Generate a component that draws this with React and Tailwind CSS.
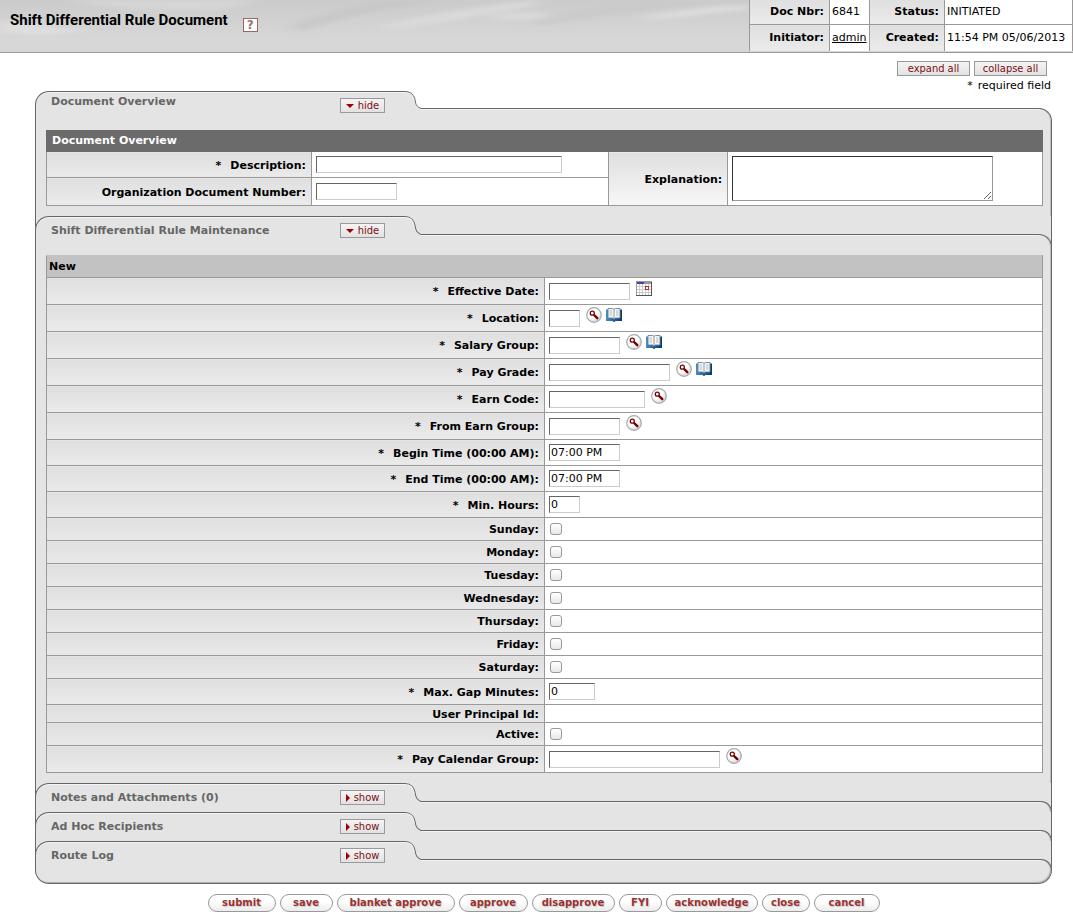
import React from "react";

const LABEL =
  "bg-[linear-gradient(#dfdfdf,#f7f7f7_53px)] border border-[#999] pr-[5px] text-right font-bold";
const FORM_LABEL = LABEL + " pt-[2px]";
const CELL = "border border-[#999] bg-white px-1 text-left";
const FIELD =
  "block h-[17px] rounded-none border border-t-[#666] border-l-[#666] border-r-[#ccc] border-b-[#ccc] bg-white px-px text-[11px] leading-[15px] outline-none";
const SMALL_BUTTON =
  "flex h-[15px] shrink-0 items-center justify-center border border-[#999] bg-[linear-gradient(#f4f4f4,#e2e2e2)] font-['DejaVu_Sans_Condensed','DejaVu_Sans',sans-serif] text-[11px] leading-[13px] text-[#7a1010]";

function LookupIcon() {
  return (
    <svg width="16" height="16" viewBox="0 0 16 16" aria-hidden="true">
      <defs>
        <radialGradient id="lookup-face" cx="0.4" cy="0.35" r="0.7">
          <stop offset="0.5" stopColor="#ffffff" />
          <stop offset="1" stopColor="#cccccc" />
        </radialGradient>
      </defs>
      <circle cx="8" cy="8" r="7.3" fill="url(#lookup-face)" stroke="#a4abaf" strokeWidth="1.2" />
      <circle cx="6.3" cy="6.2" r="2" fill="#fff" stroke="#700" strokeWidth="1.3" />
      <path d="M7.700 7.600L8.600 8.500" stroke="#700" strokeWidth="1.3" />
      <path d="M8.700 8.600L11.300 11.200" stroke="#700" strokeWidth="2.4" strokeLinecap="round" />
    </svg>
  );
}

function BookIcon() {
  return (
    <svg width="16" height="16" viewBox="0 0 16 16" aria-hidden="true">
      <defs>
        <linearGradient id="book-cover" x1="0" y1="0" x2="1" y2="0">
          <stop offset="0" stopColor="#4a8fc2" />
          <stop offset="0.4" stopColor="#2c699f" />
          <stop offset="1" stopColor="#0e3765" />
        </linearGradient>
      </defs>
      <path d="M0 2.500h16v11.500H9.500L8.500 15h-1L6.500 14H0z" fill="url(#book-cover)" />
      <path d="M2 1.500h4.500L8 2.300l1.500-.8H14V11H9.500L8 12l-1.500-1H2z" fill="#f6f6f4" stroke="#5f87a8" strokeWidth=".9" />
      <path d="M8 2.500v9" stroke="#999" strokeWidth="1" />
      <path d="M3.500 4h2.500M3.500 6h2.500M3.500 8h2.500M10 4h2.500M10 6h2.500M10 8h2.500" stroke="#b5b5b5" strokeWidth=".9" />
    </svg>
  );
}

function CalendarIcon() {
  return (
    <svg width="16" height="16" viewBox="0 -1 16 16" shapeRendering="crispEdges" aria-hidden="true">
      <path d="M0 0h16v15H0z" fill="#fff" />
      <path d="M0 0h16v3H0z" fill="#999" />
      <path d="M1 1h7v2H1z" fill="#4444aa" />
      <path d="M3.500 3v11M6.500 3v11M9.500 3v11M12.500 3v11M1 5.500h14M1 8.500h14M1 11.500h14" stroke="#ccc" />
      <path d="M.5 0v15" stroke="#999" />
      <path d="M15.500 1v14M0 14.500h16" stroke="#555" />
      <path d="M9.500 5.500h3v3h-3z" fill="#fff" stroke="#a33" />
    </svg>
  );
}

function HeaderTexture() {
  return (
    <svg className="absolute inset-0 h-full w-full" viewBox="0 0 1073 52" preserveAspectRatio="none" aria-hidden="true">
      <defs>
        <linearGradient id="hd" x1="0" y1="0" x2="0" y2="1">
          <stop offset="0" stopColor="#cbcbcb" />
          <stop offset="0.5" stopColor="#d3d3d3" />
          <stop offset="0.8" stopColor="#d7d7d7" />
        </linearGradient>
        <filter id="soft" x="-20%" y="-50%" width="140%" height="200%">
          <feGaussianBlur stdDeviation="8 2" />
        </filter>
      </defs>
      <rect width="1073" height="52" fill="url(#hd)" />
      <g filter="url(#soft)">
        <path d="M0 20 Q40 26 90 30 L40 36 L0 32z" fill="#dedede" />
        <path d="M60 0 Q170 16 230 8 L260 0z" fill="#d6d6d6" />
        <path d="M300 32 Q350 12 450 0 L380 0 Q320 14 290 26z" fill="#c8c8c8" />
        <path d="M380 26 Q440 12 520 2 L545 0 L530 6 Q470 18 390 30z" fill="#dadada" />
        <path d="M490 16 Q540 8 560 18 L500 20z" fill="#dadada" />
        <path d="M540 26 Q620 10 750 2 L750 0 L640 0 Q570 10 530 22z" fill="#cacaca" />
        <path d="M640 18 Q690 7 750 5 L750 9 Q700 14 650 20z" fill="#dedede" />
      </g>
    </svg>
  );
}

function TabCurve({ first }) {
  return (
    <svg
      className={first ? "block h-[18px] w-4" : "block h-[19px] w-4"}
      viewBox="0 0 16 18"
      preserveAspectRatio="none"
      aria-hidden="true"
    >
      <path d="M0 .5C6 .5 9.500 4.500 10.200 9.500C10.700 14 12 15.500 16 17.500V18H0z" fill="#e4e4e4" />
      <path d="M0 1.500C5.500 1.500 8.500 5 9.200 10" fill="none" stroke="#f8f8f8" />
      <path d="M0 .5C6 .5 9.500 4.500 10.200 9.500C10.700 14 12 15.500 16 17.500" fill="none" stroke="#666" />
    </svg>
  );
}

function ToggleButton({ open, title }) {
  return (
    <button
      type="button"
      aria-expanded={open}
      aria-label={(open ? "hide " : "show ") + title}
      className={SMALL_BUTTON + " mt-[6px] mr-5 w-[45px] gap-1"}
    >
      {open ? (
        <svg width="8" height="4" viewBox="0 0 8 4" aria-hidden="true">
          <path d="M0 0h8L4 4z" fill="#a00000" />
        </svg>
      ) : (
        <svg width="4" height="8" viewBox="0 0 4 8" aria-hidden="true">
          <path d="M0 0v8l4-4z" fill="#a00000" />
        </svg>
      )}
      {open ? "hide" : "show"}
    </button>
  );
}

function Section({ title, open = false, first, last, children }) {
  return (
    <section>
      <div
        className={
          "flex border-x " +
          (first ? "border-transparent " : "border-[#666] bg-[#e4e4e4] ") +
          (open ? "h-[39px]" : "h-[29px]")
        }
      >
        <div className="-ml-px flex w-[370px] items-start rounded-tl-[14px] border-t border-l border-[#666] bg-[#e4e4e4] pl-[15px] shadow-[inset_0_1px_0_#f4f4f4]">
          <h2 className={"grow text-[11px] leading-[14px] font-bold text-[#666] " + (first ? "pt-[3px]" : "pt-[7px]")}>{title}</h2>
          <ToggleButton open={open} title={title} />
        </div>
        <div className="flex flex-col">
          <TabCurve first={first} />
          <div className="grow bg-[#e4e4e4]" />
        </div>
        <div
          className={
            "-mr-px grow rounded-tr-[13px] border-t border-r border-[#666] bg-[#e4e4e4] shadow-[inset_-1px_0_0_#bbb,inset_0_1px_0_#f4f4f4] " +
            (first ? "mt-[17px]" : "mt-[18px]")
          }
        />
      </div>
      {open && (
        <div className="border-x border-[#666] bg-[#e4e4e4] pr-2 pb-[10px] pl-[10px] shadow-[inset_-1px_0_0_#bbb]">{children}</div>
      )}
      {last && (
        <div className="h-[14px] rounded-b-[14px] border-x border-b border-[#666] bg-[#e4e4e4] shadow-[inset_-1px_-1px_1px_#aaa]" />
      )}
    </section>
  );
}

const ROWS = [
  { id: "date", label: "Effective Date", req: true, w: "w-[81px]", icons: ["calendar"] },
  { id: "location", label: "Location", req: true, w: "w-[31px]", icons: ["lookup", "book"] },
  { id: "salary", label: "Salary Group", req: true, w: "w-[71px]", icons: ["lookup", "book"] },
  { id: "grade", label: "Pay Grade", req: true, w: "w-[121px]", icons: ["lookup", "book"] },
  { id: "earn", label: "Earn Code", req: true, w: "w-[96px]", icons: ["lookup"] },
  { id: "from", label: "From Earn Group", req: true, w: "w-[71px]", icons: ["lookup"] },
  { id: "begin", label: "Begin Time (00:00 AM)", req: true, w: "w-[71px]", value: "07:00 PM" },
  { id: "end", label: "End Time (00:00 AM)", req: true, w: "w-[71px]", value: "07:00 PM" },
  { id: "min", label: "Min. Hours", req: true, w: "w-[31px]", value: "0" },
  { id: "sun", label: "Sunday", check: true },
  { id: "mon", label: "Monday", check: true },
  { id: "tue", label: "Tuesday", check: true },
  { id: "wed", label: "Wednesday", check: true },
  { id: "thu", label: "Thursday", check: true },
  { id: "fri", label: "Friday", check: true },
  { id: "sat", label: "Saturday", check: true },
  { id: "gap", label: "Max. Gap Minutes", req: true, w: "w-[46px]", value: "0" },
  { id: "principal", label: "User Principal Id", empty: true },
  { id: "active", label: "Active", check: true },
  { id: "calendar", label: "Pay Calendar Group", req: true, w: "w-[171px]", icons: ["lookup"] },
];

const ICONS = {
  calendar: { el: <CalendarIcon />, name: "Pick date" },
  lookup: { el: <LookupIcon />, name: "Search" },
  book: { el: <BookIcon />, name: "Direct inquiry" },
};

function Label({ id, req, children }) {
  return (
    <label htmlFor={id}>
      {req && <span className="mr-[9px]">*</span>}
      {children}:
    </label>
  );
}

function FieldRow({ row }) {
  const height = row.icons ? "h-[27px]" : row.check ? "h-[23px]" : row.empty ? "h-[18px]" : "h-[26px]";
  return (
    <tr className={height}>
      <th scope="row" className={FORM_LABEL}>
        {row.empty ? <span>{row.label}:</span> : <Label id={row.id} req={row.req}>{row.label}</Label>}
      </th>
      <td className={CELL}>
        {row.check && (
          <input
            id={row.id}
            type="checkbox"
            className="ml-px block h-3 w-3 appearance-none rounded-[3px] border border-[#999] bg-[linear-gradient(#fff,#e8e8e8)] checked:bg-[#888]"
          />
        )}
        {row.w && (
          <div className={"flex items-start gap-1" + (row.icons ? " pb-[2px]" : "")}>
            <input
              id={row.id}
              type="text"
              defaultValue={row.value}
              className={FIELD + " " + row.w + (row.icons ? " mt-[3px] mr-[2px]" : "")}
            />
            {row.icons &&
              row.icons.map((name) => (
                <button key={name} type="button" aria-label={ICONS[name].name + ": " + row.label} className="block">
                  {ICONS[name].el}
                </button>
              ))}
          </div>
        )}
      </td>
    </tr>
  );
}

const ACTIONS = [
  ["submit", "w-[68px]"],
  ["save", "w-[53px]"],
  ["blanket approve", "w-[118px]"],
  ["approve", "w-[69px]"],
  ["disapprove", "w-[83px]"],
  ["FYI", "w-[43px]"],
  ["acknowledge", "w-[92px]"],
  ["close", "w-[48px]"],
  ["cancel", "w-[66px]"],
];

export default function App() {
  return (
    <div className="bg-white font-['DejaVu_Sans',sans-serif] text-[11px] leading-[14px] text-black">
      <header className="relative flex h-[53px] items-start justify-between border-b border-[#999] bg-[#d7d7d7]">
        <HeaderTexture />
        <div className="relative flex items-start gap-[15px] pt-[10px] pl-[10px]">
          <h1 className="font-[Roboto,'Liberation_Sans',sans-serif] text-[15px] leading-[20px] font-bold">
            Shift Differential Rule Document
          </h1>
          <a
            href="#help"
            aria-label="Help"
            className="mt-[8px] flex h-[14px] w-[15px] items-center justify-center border border-[#966] bg-white text-[12px] leading-[12px] font-bold text-[#a07060]"
          >
            ?
          </a>
        </div>
        <table className="relative w-[324px] table-fixed border-collapse">
          <colgroup>
            <col className="w-[80px]" />
            <col className="w-[40px]" />
            <col className="w-[75px]" />
            <col />
          </colgroup>
          <tbody>
            <tr className="h-[24px]">
              <th scope="row" className={LABEL + " border-t-0"}>Doc Nbr:</th>
              <td className="border border-t-0 border-[#999] bg-white pl-[2px]">6841</td>
              <th scope="row" className={LABEL + " border-t-0"}>Status:</th>
              <td className="border border-t-0 border-[#999] bg-white pl-[2px]">INITIATED</td>
            </tr>
            <tr className="h-[27px]">
              <th scope="row" className={LABEL + " border-b-0"}>Initiator:</th>
              <td className="border border-b-0 border-[#999] bg-white pl-[2px]">
                <a href="#admin" className="underline">admin</a>
              </td>
              <th scope="row" className={LABEL + " border-b-0"}>Created:</th>
              <td className="border border-b-0 border-[#999] bg-white pl-[2px] whitespace-nowrap">11:54 PM 05/06/2013</td>
            </tr>
          </tbody>
        </table>
      </header>

      <main className="mr-[21px] ml-[35px]">
        <div className="flex h-[38px] flex-col items-end gap-[3px] pt-2">
          <div className="flex gap-1 pr-[5px]">
            <button type="button" className={SMALL_BUTTON + " w-[73px]"}>expand all</button>
            <button type="button" className={SMALL_BUTTON + " w-[73px]"}>collapse all</button>
          </div>
          <p className="flex gap-[5px] pr-px">
            <span>*</span>
            <span>required field</span>
          </p>
        </div>

        <Section title="Document Overview" open first>
          <table className="w-full table-fixed border-collapse">
            <colgroup>
              <col className="w-[26.6%]" />
              <col className="w-[29.8%]" />
              <col className="w-[12%]" />
              <col />
            </colgroup>
            <tbody>
              <tr className="h-[21px]">
                <th colSpan={4} className="border border-[#6b6b6b] bg-[#6b6b6b] pl-[5px] text-left text-white">
                  Document Overview
                </th>
              </tr>
              <tr className="h-[26px]">
                <th scope="row" className={FORM_LABEL}>
                  <Label id="description" req>Description</Label>
                </th>
                <td className={CELL}>
                  <input id="description" type="text" className={FIELD + " w-[246px]"} />
                </td>
                <th scope="row" rowSpan={2} className={FORM_LABEL}>
                  <Label id="explanation">Explanation</Label>
                </th>
                <td rowSpan={2} className={CELL}>
                  <textarea
                    id="explanation"
                    className="block h-[45px] w-[261px] rounded-none border border-t-[#333] border-r-[#999] border-b-[#999] border-l-[#333] bg-white outline-none"
                  />
                </td>
              </tr>
              <tr className="h-[28px]">
                <th scope="row" className={FORM_LABEL}>
                  <Label id="orgdoc">Organization Document Number</Label>
                </th>
                <td className={CELL}>
                  <input id="orgdoc" type="text" className={FIELD + " w-[81px]"} />
                </td>
              </tr>
            </tbody>
          </table>
        </Section>

        <Section title="Shift Differential Rule Maintenance" open>
          <table className="w-full table-fixed border-collapse">
            <tbody>
              <tr className="h-[22px]">
                <th colSpan={2} className="border border-t-[#c2c2c2] border-r-[#999] border-b-[#999] border-l-[#999] bg-[#c2c2c2] pl-[2px] text-left">
                  New
                </th>
              </tr>
              {ROWS.map((row) => (
                <FieldRow key={row.id} row={row} />
              ))}
            </tbody>
          </table>
        </Section>

        <Section title="Notes and Attachments (0)" />
        <Section title="Ad Hoc Recipients" />
        <Section title="Route Log" last />

        <div className="mt-[10px] flex justify-center gap-1 pb-3">
          {ACTIONS.map(([name, width]) => (
            <button
              key={name}
              type="button"
              className={
                "h-[18px] shrink-0 rounded-full border border-[#999] bg-[linear-gradient(#fff_40%,#ececec)] text-[10px] leading-[14px] font-bold whitespace-nowrap text-[#933] [text-shadow:1px_1px_1px_#ccc] " +
                width
              }
            >
              {name}
            </button>
          ))}
        </div>
      </main>
    </div>
  );
}
